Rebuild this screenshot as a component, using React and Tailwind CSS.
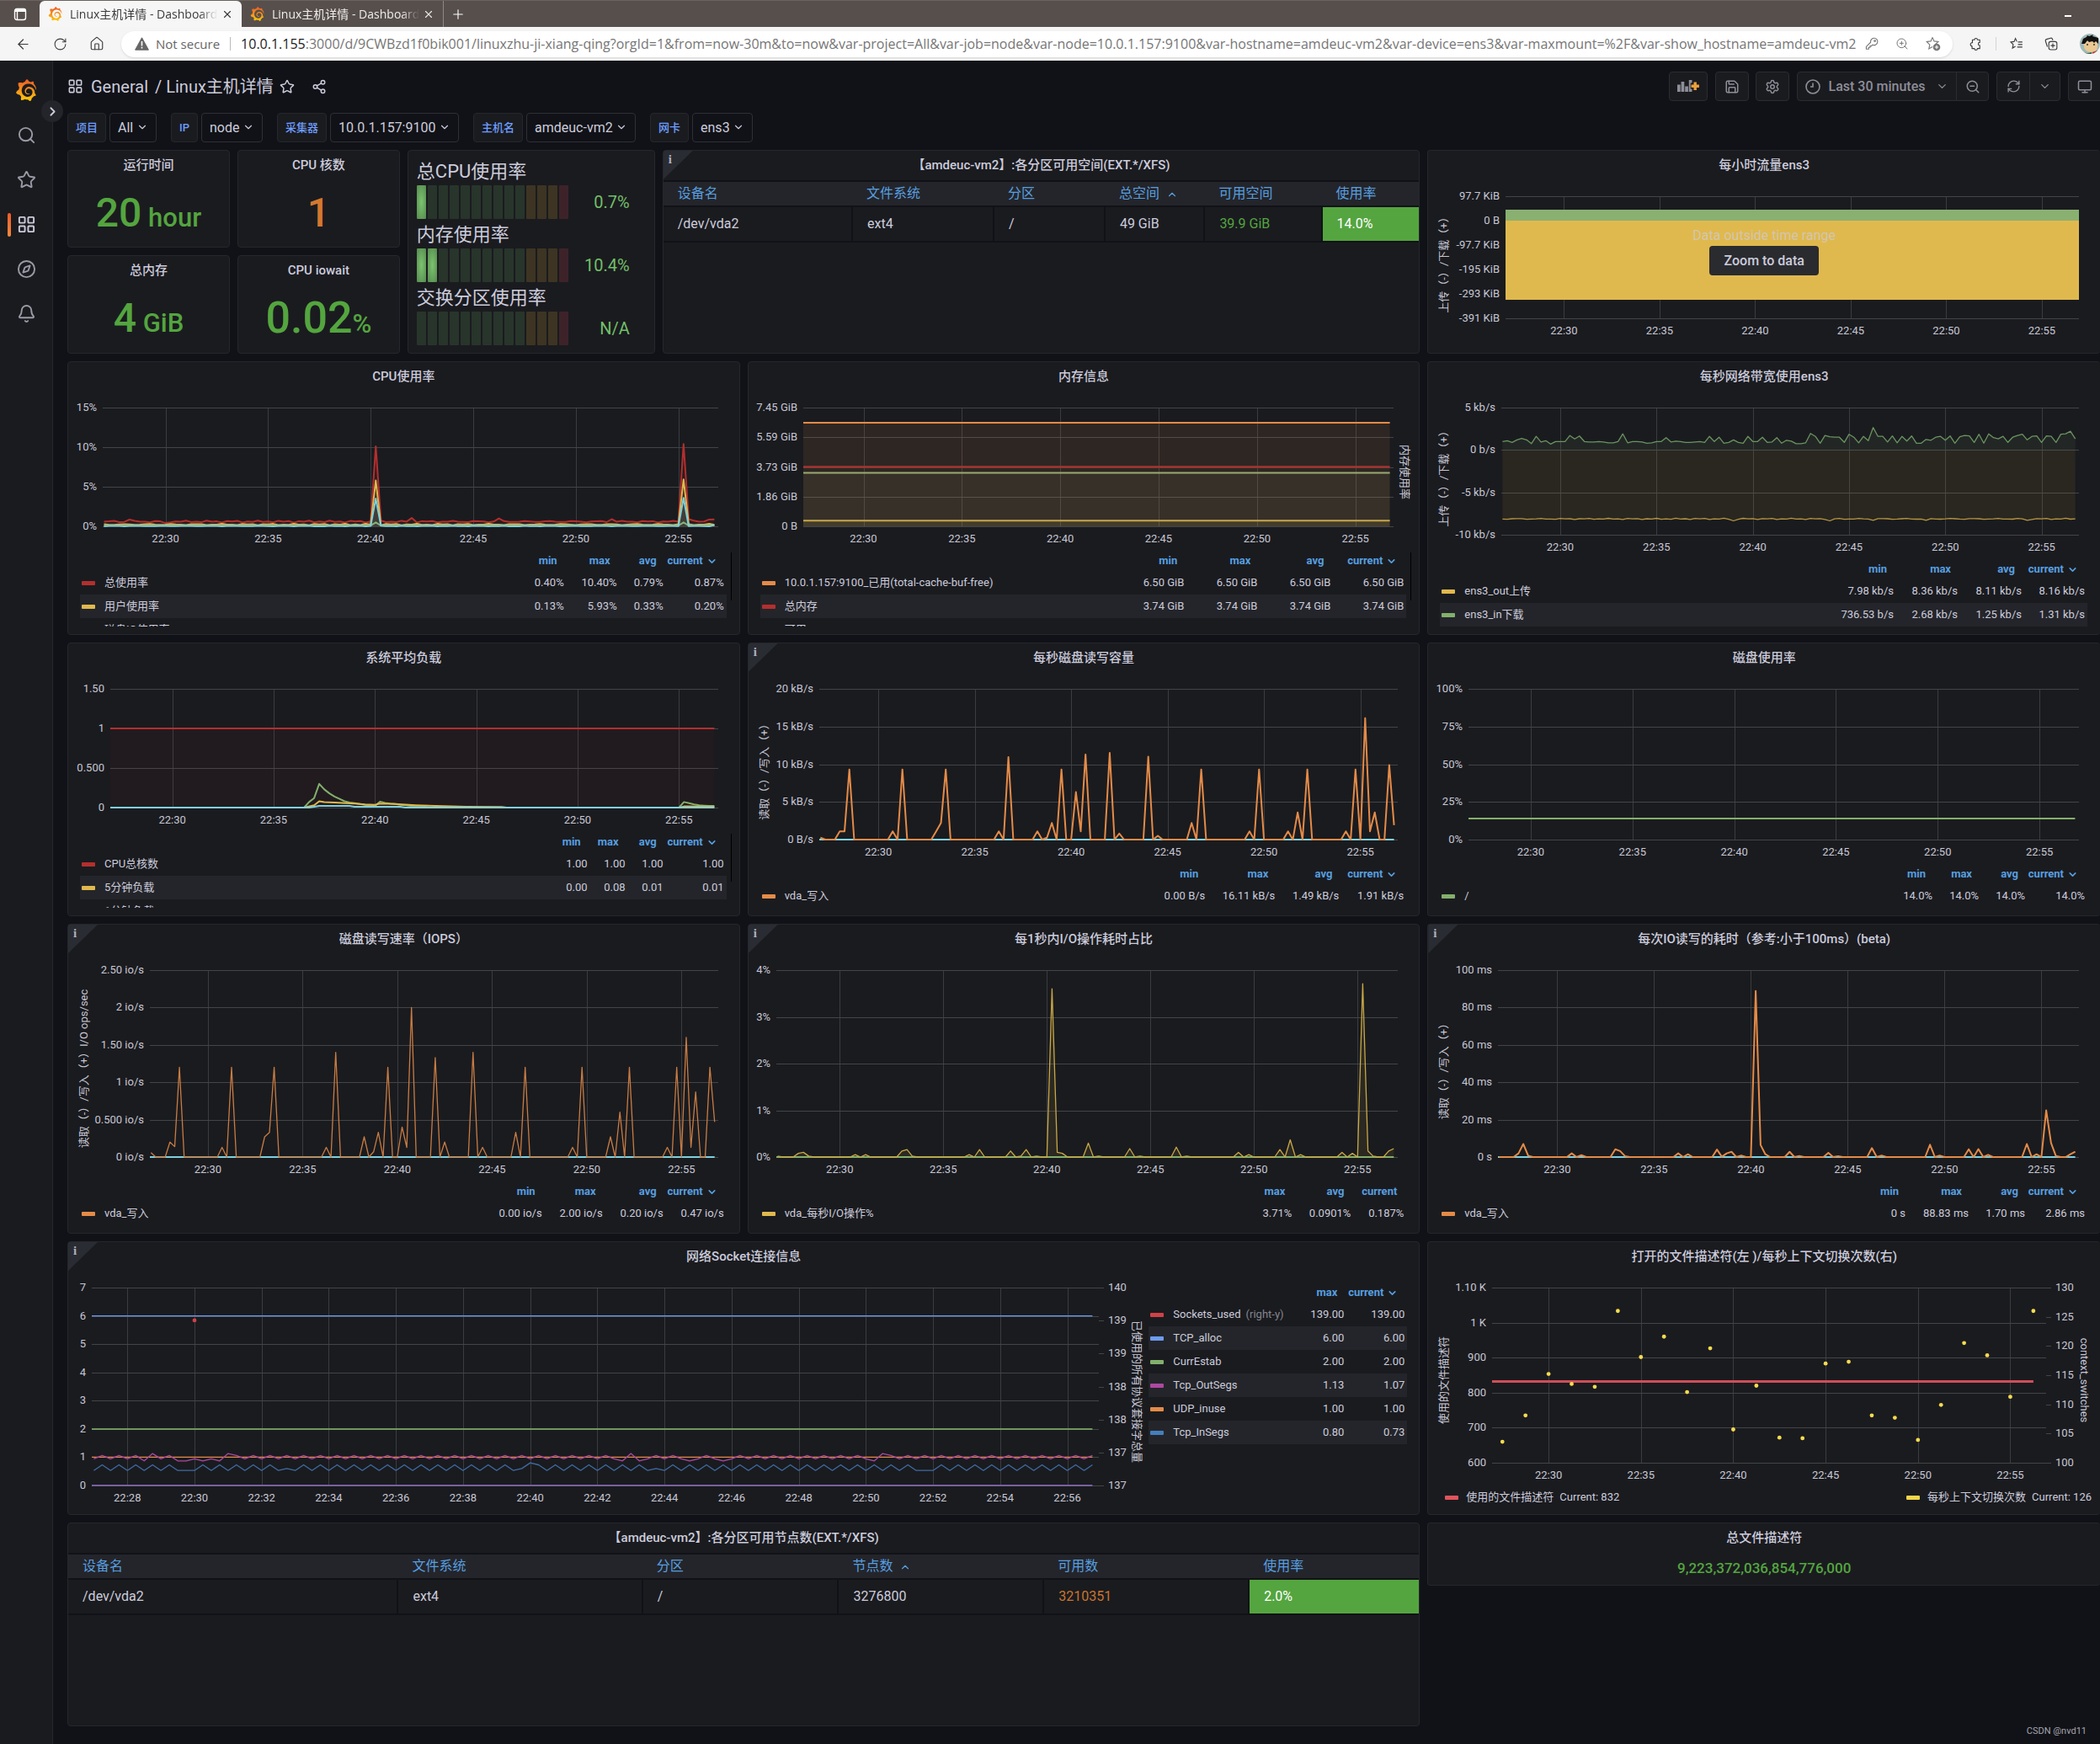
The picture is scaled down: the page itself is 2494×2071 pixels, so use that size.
import { useLayoutEffect, useRef, useState } from "react";
import {
  ArrowLeft,
  Bell,
  ChevronDown,
  ChevronRight,
  ChevronUp,
  Compass,
  House,
  LayoutGrid,
  Monitor,
  Plus,
  RefreshCw,
  RotateCw,
  Save,
  Search,
  Settings,
  Share2,
  Star,
  X,
  ZoomIn,
  ZoomOut,
} from "lucide-react";
import { SiGrafana } from "react-icons/si";

/* ---------- time series data ---------- */

// minutes after 22:00
const T0 = 26.94;
const SPAN = 30;
const STEP = 0.25;

const times = Array.from({ length: 120 }, (_, i) => 27 + i * STEP);

// fills every 15s step, anything that is not listed falls back to base
const sparse = (points, base = 0) =>
  times.map((t) => [t, points[t] ?? (typeof base === "function" ? base(t) : base)]);

const flat = (v, end = 56.75) => [[T0, v], [end, v]];

const wave = (t, k) => (Math.sin(t * 5.3 + k) + Math.sin(t * 12.7 + k * 3)) / 2;

const cpuTotal = sparse(
  { 28.25: 0.85, 30: 0.42, 40.25: 10.1, 42: 1.05, 46.25: 1, 51.75: 0.9, 55: 0.6, 55.25: 10.4, 55.5: 0.9, 56.5: 0.86, 56.75: 0.87 },
  (t) => 0.6 + 0.13 * wave(t, 1)
);
const cpuUser = sparse({ 40.25: 5.8, 55.25: 5.93 }, (t) => 0.23 + 0.1 * wave(t, 4));
const cpuSys = sparse({ 40.25: 3.5, 55.25: 3.6, 56.75: 0.15 }, (t) => 0.04 + 0.05 * wave(t, 7));
const cpuWait = sparse({ 40.25: 0.5, 55.25: 0.5 }, 0.1);

const load1 = sparse({
  36.75: 0.07, 37: 0.12, 37.25: 0.3, 37.5: 0.23, 37.75: 0.18, 38: 0.14, 38.25: 0.11, 38.5: 0.08, 38.75: 0.065,
  39: 0.055, 39.25: 0.045, 39.5: 0.035, 39.75: 0.02, 40: 0.02, 40.25: 0.075, 40.5: 0.06, 40.75: 0.05, 41: 0.045,
  41.25: 0.035, 41.5: 0.03, 41.75: 0.02, 42: 0.02, 42.25: 0.01, 42.5: 0.01, 55.25: 0.07, 55.5: 0.055, 55.75: 0.04,
  56: 0.03, 56.25: 0.025, 56.5: 0.02, 56.75: 0.02,
});
const load5 = [
  [T0, 0], [36.5, 0], [37, 0.03], [37.25, 0.08], [37.5, 0.07], [38, 0.065], [39, 0.05], [39.5, 0.04], [40, 0.035],
  [40.25, 0.05], [41, 0.045], [42, 0.03], [43, 0.02], [44.5, 0.012], [46.25, 0.008], [46.5, 0], [55, 0], [55.25, 0.015], [56.75, 0.01],
];
const load15 = [[T0, 0], [36.75, 0], [37.25, 0.02], [38.75, 0.02], [39, 0.01], [41.25, 0.01], [41.5, 0], [56.75, 0]];

const diskWrite = sparse({
  27: 0.25, 28: 1.1, 28.25: 1.1, 28.5: 9.3, 30.75: 1.1, 31.25: 9.3, 33: 1.1, 33.25: 2.2, 33.5: 9.3, 36.25: 1.1,
  36.75: 10.95, 38.25: 1.1, 38.75: 0.25, 39: 2.2, 39.5: 9.3, 40.25: 6.3, 40.5: 1.1, 40.75: 11.3, 42: 11.5, 42.5: 0.8,
  44: 11, 44.5: 0.5, 46.25: 2.2, 46.75: 9.3, 49.25: 1.1, 49.75: 9.3, 51.25: 1.1, 51.75: 3.6, 52.25: 9.3, 54.25: 1.1,
  54.75: 9.3, 55.25: 16.11, 55.5: 1.1, 55.75: 3.6, 56.5: 9.9, 56.75: 1.91,
});
const iops = sparse({
  27: 0.06, 28: 0.2, 28.25: 0.14, 28.5: 1.2, 30.75: 0.13, 31.25: 1.2, 33: 0.27, 33.25: 0.33, 33.5: 1.2, 36.25: 0.13,
  36.75: 1.4, 38.25: 0.27, 38.75: 0.07, 39: 0.33, 39.5: 1.2, 40.25: 0.4, 40.5: 0.13, 40.75: 2, 42: 1.33, 42.5: 0.2,
  44: 1.4, 44.5: 0.13, 46.25: 0.33, 46.75: 1.2, 49.25: 0.13, 49.75: 1.2, 51.25: 0.27, 51.75: 0.6, 52.25: 1.2,
  54.25: 0.13, 54.75: 1.2, 55.25: 1.6, 55.5: 0.13, 55.75: 0.87, 56.5: 1.2, 56.75: 0.47,
});
const ioPercent = sparse({
  27: 0.02, 28: 0.08, 28.25: 0.1, 28.5: 0.02, 30.75: 0.05, 31.25: 0.05, 33: 0.13, 33.25: 0.16, 33.5: 0.02, 36.25: 0.05,
  36.75: 0.16, 38.25: 0.13, 38.75: 0.02, 39: 0.16, 39.5: 0.02, 40.25: 3.6, 40.5: 0.1, 40.75: 0.08, 42: 0.3, 42.5: 0.02,
  44: 0.18, 44.5: 0.02, 46.25: 0.21, 46.75: 0.02, 49.25: 0.1, 49.75: 0.05, 51.25: 0.16, 51.75: 0.37, 52.25: 0.05,
  54.25: 0.1, 54.75: 0.08, 55.25: 3.71, 55.5: 0.13, 55.75: 0.02, 56.5: 0.13, 56.75: 0.18,
});
const ioTime = sparse({
  28: 2, 28.25: 7, 28.5: 0.7, 30.75: 2, 31.25: 1, 33: 4.2, 33.25: 3.2, 33.5: 0.5, 36.25: 2, 36.75: 1.5, 38.25: 4,
  38.5: 0.2, 38.75: 2, 39: 2.8, 39.5: 0.8, 40.25: 88.83, 40.5: 6.5, 40.75: 1.5, 42: 2.8, 42.5: 0.6, 44: 2.3, 44.5: 0.4,
  46.25: 4.8, 46.75: 0.8, 49.25: 6.6, 49.75: 0.8, 51.25: 4.2, 51.75: 4.3, 52.25: 1.2, 54.25: 7, 54.75: 1.5, 55.25: 25,
  55.5: 7.5, 55.75: 0.6, 56.5: 1.5, 56.75: 2.86,
});

const netIn = [
  1, 1.1, 0.9, 1.2, 1.35, 1.2, 0.75, 1.6, 0.95, 1.1, 0.7, 1, 1, 1, 1.7, 1.3, 1.65, 1, 0.95, 0.95, 1, 0.95, 0.85, 0.85, 1,
  1.9, 0.85, 1, 1, 0.95, 0.8, 0.85, 1, 1, 1.45, 0.95, 1.05, 1, 0.9, 0.9, 0.95, 1, 0.9, 1.6, 1, 1.5, 0.8, 0.9, 1.2, 0.9,
  0.8, 1.6, 1, 1, 1.5, 0.9, 0.95, 1.45, 0.8, 1.15, 1.05, 0.75, 0.75, 0.85, 1.95, 1.6, 0.8, 1.7, 1.55, 1.5, 1.5, 0.9, 1.85,
  1.5, 0.85, 1.6, 1.1, 2.65, 1.6, 1.6, 0.95, 1.65, 0.85, 1.6, 1.05, 1.65, 0.8, 0.8, 1.25, 1.15, 1.5, 1.6, 1.15, 1.65, 0.8,
  1.55, 1.7, 1.65, 0.9, 1.85, 0.8, 1.9, 1.45, 1.3, 1.6, 0.9, 1.5, 1.7, 1.85, 1.2, 1.6, 1.65, 0.9, 1.65, 1.6, 0.9, 1.85,
  1.9, 2.2, 1.3,
].map((v, i) => [27 + i * STEP, v]);
const netOut = sparse({ 39: -8.36, 44: -8.36, 46.25: -8.3, 49: -8.3, 54.25: -8.3 }, (t) => -8.13 - 0.08 * wave(t, 2));

const outSegs = sparse(
  { 28.5: 0.87, 28.75: 1.13, 29.5: 0.87, 29.75: 0.87, 30.25: 0.87, 30.75: 0.87, 31: 1.13, 42.75: 0.87, 43: 1.13, 43.25: 0.87, 44.75: 0.87, 45.75: 0.87, 50.25: 0.87, 50.5: 1.13 },
  (t) => ((t * 4) % 2 === 1 ? 1.06 : 0.94)
);
const inSegs = sparse(
  { 29.5: 0.53, 29.75: 0.53, 32.75: 0.6, 39.75: 0.6, 40: 0.8, 43.75: 0.6, 51.75: 0.53, 52: 0.53 },
  (t) => ((t * 4) % 2 === 1 ? 0.73 : 0.53)
);

const contextSwitches = [
  103.6, 108.1, 115.2, 113.5, 113, 126, 118.1, 121.6, 112.1, 119.6, 105.7, 113.2, 104.3, 104.2, 117, 117.3, 108.1, 107.7,
  103.9, 109.9, 120.5, 118.4, 111.3, 126,
].map((v, i) => [27.5 + i * 1.25, v]);

/* ---------- chart ---------- */

const FIVE_MIN = [30, 35, 40, 45, 50, 55];
const TWO_MIN = [28, 30, 32, 34, 36, 38, 40, 42, 44, 46, 48, 50, 52, 54, 56];

const useSize = () => {
  const ref = useRef(null);
  const [size, setSize] = useState({ width: 0, height: 0 });

  useLayoutEffect(() => {
    const measure = () => {
      const { width, height } = ref.current.getBoundingClientRect();
      setSize({ width: Math.round(width), height: Math.round(height) });
    };
    measure();
    window.addEventListener("resize", measure);
    return () => window.removeEventListener("resize", measure);
  }, []);

  return [ref, size];
};

const Chart = ({
  left,
  right = 25,
  yTicks,
  yTicksRight,
  min = 0,
  max,
  xTicks = FIVE_MIN,
  series = [],
  dots = [],
  yLabel,
  yLabelRight,
  yLabelRightX = 13,
  children,
}) => {
  const [ref, { width, height }] = useSize();
  const top = 19;
  const plotW = width - left - right;
  const plotH = height - top - 29;
  const x = (t) => left + ((t - T0) / SPAN) * plotW;
  const y = (v, lo = min, hi = max) => top + (1 - (v - lo) / (hi - lo)) * plotH;
  const line = (pts) => pts.map(([t, v], i) => `${i ? "L" : "M"}${x(t).toFixed(1)} ${y(v).toFixed(1)}`).join("");
  const crisp = (v) => Math.round(v) + 0.5;
  const labelY = top + plotH / 2 + 6;

  return (
    <div ref={ref} className="relative min-h-0 min-w-0 flex-1">
      {width > 0 && (
        <svg width={width} height={height} className="absolute inset-0 overflow-visible fill-[#c7c7d4] text-[13px]">
          {xTicks.map((t) => (
            <g key={t}>
              <line x1={crisp(x(t))} x2={crisp(x(t))} y1={top} y2={top + plotH} stroke="#3b3c40" />
              <text x={x(t)} y={top + plotH + 19} textAnchor="middle">
                22:{t}
              </text>
            </g>
          ))}
          {yTicks.map((label, i) => {
            const ty = top + (i / (yTicks.length - 1)) * plotH;
            return (
              <g key={i}>
                <line x1={left} x2={left + plotW} y1={crisp(ty)} y2={crisp(ty)} stroke="#434448" />
                <text x={left - 7} y={ty + 4} textAnchor="end">
                  {label}
                </text>
              </g>
            );
          })}
          {yTicksRight?.map((label, i) => {
            const ty = top + (i / (yTicksRight.length - 1)) * plotH;
            return (
              <g key={i}>
                <line x1={left + plotW} x2={left + plotW + 6} y1={crisp(ty)} y2={crisp(ty)} stroke="#434448" />
                <text x={left + plotW + 11} y={ty + 4}>
                  {label}
                </text>
              </g>
            );
          })}
          {series.map(({ color, points, stroke = 2, fill = 0, opacity = 1 }, i) => (
            <g key={i} fill="none">
              {fill > 0 && (
                <path
                  d={`${line(points)}L${x(points.at(-1)[0])} ${y(0)}L${x(points[0][0])} ${y(0)}Z`}
                  fill={color}
                  fillOpacity={fill}
                />
              )}
              <path d={line(points)} stroke={color} strokeWidth={stroke} strokeOpacity={opacity} strokeLinejoin="round" />
            </g>
          ))}
          {dots.map(({ color, points, lo, hi }, i) => (
            <g key={i} fill={color}>
              {points.map(([t, v]) => (
                <circle key={t} cx={x(t)} cy={y(v, lo, hi)} r="2.4" />
              ))}
            </g>
          ))}
          {yLabel && (
            <text transform={`translate(23 ${labelY}) rotate(-90)`} textAnchor="middle">
              {yLabel}
            </text>
          )}
          {yLabelRight && (
            <text transform={`translate(${width - yLabelRightX - 10} ${labelY}) rotate(90)`} textAnchor="middle">
              {yLabelRight}
            </text>
          )}
        </svg>
      )}
      {children}
    </div>
  );
};

/* ---------- building blocks ---------- */

const Panel = ({ title, info, className, children }) => (
  <section className={`relative flex min-h-0 min-w-0 flex-col rounded-sm border border-[#26272c] bg-[#1a1b1f] ${className}`}>
    {info && (
      <span className="absolute left-0 top-0 h-[34px] w-[35px] bg-[#2a2c33] pl-[6px] pt-[2px] font-['Liberation_Serif',serif] text-[15px] font-bold leading-4 text-[#b0b0bb] [clip-path:polygon(0_0,100%_0,0_100%)]">
        i
      </span>
    )}
    {title && (
      <h2 className="h-[35px] shrink-0 text-center text-[15px] font-medium leading-[35px] whitespace-nowrap">{title}</h2>
    )}
    {children}
  </section>
);

const SERIES_BG = {
  red: "bg-[#b32f2e]",
  yellow: "bg-[#e0b94e]",
  orange: "bg-[#e48b48]",
  green: "bg-[#82b06c]",
  crimson: "bg-[#cf4247]",
  blue: "bg-[#6e9cf0]",
  purple: "bg-[#ad489f]",
  navy: "bg-[#447ebc]",
};

const Legend = ({ columns, widths, rows, sort = true, clipped, scroll, wrap = "pl-[14px] pr-[15px] pb-[9px]" }) => (
  <div className={`relative shrink-0 ${wrap}`}>
    <div className={clipped ? "h-[90px] overflow-hidden" : ""}>
      <table className="w-full table-fixed border-collapse text-[13px]">
        <thead>
          <tr className="h-6 text-[#579fe0]">
            <th />
            {columns.map((c, i) => (
              <th key={c} style={{ width: widths[i] }} className="p-0 pr-[11px] text-right font-bold whitespace-nowrap">
                {c}
                {sort && i === columns.length - 1 && <ChevronDown size={13} strokeWidth={3} className="ml-1 inline" />}
              </th>
            ))}
          </tr>
        </thead>
        <tbody>
          {rows.map(([color, name, ...values]) => (
            <tr key={name} className="h-7 even:bg-[#24252a]">
              <td className="p-0 whitespace-nowrap">
                <span className={`ml-[2px] mr-[11px] inline-block h-[5px] w-4 rounded-[1px] align-middle ${SERIES_BG[color]}`} />
                {name}
                {name === "Sockets_used" && <span className="ml-[6px] text-[#85858f]">(right-y)</span>}
              </td>
              {values.map((v, i) => (
                <td key={i} className="p-0 pr-[3px] text-right whitespace-nowrap">
                  {v}
                </td>
              ))}
            </tr>
          ))}
        </tbody>
      </table>
    </div>
    {scroll && <span className="absolute right-[9px] top-[2px] h-[57px] w-px bg-black" />}
  </div>
);

const DataTable = ({ columns, row }) => (
  <table className="w-full table-fixed border-collapse text-left text-[16px]">
    <thead>
      <tr className="h-[30px] border-y-2 border-[#111217] bg-[#24252a] text-[#579fe0]">
        {columns.map(({ label, width, sorted }) => (
          <th key={label} style={{ width }} className="p-0 pl-[17px] font-normal">
            {label}
            {sorted && <ChevronUp size={14} className="ml-2 inline" />}
          </th>
        ))}
      </tr>
    </thead>
    <tbody>
      <tr className="h-[42px] border-b-2 border-[#111217]">
        {row.map(({ value, className = "" }) => (
          <td key={value} className={`border-r-2 border-[#111217] p-0 pl-[17px] last:border-r-0 ${className}`}>
            {value}
          </td>
        ))}
      </tr>
    </tbody>
  </table>
);

const Stat = ({ title, value, unit, className, size = "text-[48px]", tone = "text-[#54a53f]" }) => (
  <Panel title={title} className={className}>
    <div className={`flex flex-1 items-center justify-center pb-[2px] font-medium ${tone}`}>
      <p className={`leading-none ${size}`}>
        {value}
        {unit && <span className="text-[31px]">{unit}</span>}
      </p>
    </div>
  </Panel>
);

const Gauge = ({ title, value, lit }) => (
  <div>
    <p className="h-8 text-[22px] leading-8">{title}</p>
    <div className="flex h-[43px] items-start">
      <div className="flex h-10 gap-[2px]">
        {Array.from({ length: 14 }, (_, i) => {
          let tone = "bg-[#28352b]";
          if (i >= 10) tone = "bg-[#3d3423]";
          if (i >= 13) tone = "bg-[#3d2329]";
          if (i < lit) tone = "bg-radial from-[#7cc46f] to-[#558a4f]";
          return <span key={i} className={`w-[11px] rounded-[1px] ${tone}`} />;
        })}
      </div>
      <span className="flex-1 text-right text-[20px] leading-10 text-[#73bf69]">{value}</span>
    </div>
  </div>
);

const GrafanaLogo = ({ size }) => (
  <>
    <svg width="0" height="0" className="absolute">
      <linearGradient id="grafana" x1="0" y1="0" x2="0" y2="1">
        <stop offset="0" stopColor="#f05a28" />
        <stop offset="1" stopColor="#fbca0a" />
      </linearGradient>
    </svg>
    <SiGrafana size={size} fill="url(#grafana)" />
  </>
);

/* ---------- browser chrome ---------- */

const URL_HOST = "10.0.1.155";
const URL_REST =
  ":3000/d/9CWBzd1f0bik001/linuxzhu-ji-xiang-qing?orgId=1&from=now-30m&to=now&var-project=All&var-job=node&var-node=10.0.1.157:9100&var-hostname=amdeuc-vm2&var-device=ens3&var-maxmount=%2F&var-show_hostname=amdeuc-vm2";

const BrowserTab = ({ active }) => (
  <div
    className={`flex h-8 w-60 items-center pl-[10px] pr-[10px] ${
      active ? "rounded-t-md bg-[#f6f6f6] text-[#3b3b3b]" : "my-1 border-r border-[#8f8885] text-[#eeeceb]"
    }`}
  >
    <GrafanaLogo size={17} />
    <span className="ml-[9px] text-[14px] whitespace-nowrap [mask-image:linear-gradient(to_right,black_88%,transparent)]">
      Linux主机详情 - Dashboard
    </span>
    <button aria-label="Close tab" className="ml-auto">
      <X size={14} />
    </button>
  </div>
);

const Browser = () => (
  <div className="font-['Open_Sans','Noto_Sans_CJK_SC',sans-serif]">
    <div className="flex h-8 items-center overflow-hidden border-t border-[#6b6360] bg-[#574f4c]">
      <button aria-label="Tab actions" className="ml-4 mr-[15px] text-white">
        <svg width="16" height="16" viewBox="0 0 16 16" fill="none" stroke="currentColor" strokeWidth="1.4">
          <rect x="1.500" y="1.500" width="13" height="13" rx="2.500" />
          <path d="M1.500 4h13M2 2.500h12" strokeWidth="2" />
          <path d="M4.500 4v10" />
        </svg>
      </button>
      <BrowserTab active />
      <BrowserTab />
      <button aria-label="New tab" className="ml-2 text-white">
        <Plus size={18} strokeWidth={1.5} />
      </button>
      <button aria-label="Minimize" className="ml-auto mr-[30px] flex h-6 w-3 items-center pt-1">
        <span className="h-[2px] w-2 bg-white" />
      </button>
    </div>
    <div className="flex h-10 items-center overflow-hidden bg-[#f5f5f5] text-[#3b3b3b]">
      <button aria-label="Back" className="ml-[18px]">
        <ArrowLeft size={19} strokeWidth={1.5} />
      </button>
      <button aria-label="Reload" className="ml-[26px]">
        <RotateCw size={17} strokeWidth={1.5} />
      </button>
      <button aria-label="Home" className="ml-[26px]">
        <House size={18} strokeWidth={1.5} />
      </button>
      <div className="ml-5 flex h-[31px] min-w-0 flex-1 items-center rounded-full bg-white shadow-sm">
        <svg width="17" height="16" viewBox="0 0 17 16" className="ml-4 shrink-0">
          <path d="M8.5 0.8 16.4 15.2H0.6Z" fill="#666" stroke="#666" strokeLinejoin="round" />
          <path d="M8.5 5v5.4M8.5 11.8v1.8" stroke="#fff" strokeWidth="1.6" />
        </svg>
        <span className="ml-2 shrink-0 text-[15px] text-[#666]">Not secure</span>
        <span className="mx-3 h-4 w-px shrink-0 bg-[#bbb]" />
        <p className="min-w-0 flex-1 overflow-hidden text-[16px] whitespace-nowrap text-[#767676]">
          <span className="text-[#222]">{URL_HOST}</span>
          {URL_REST}
        </p>
        <div className="flex shrink-0 items-center gap-5 pr-[14px] text-[#767676]">
          <svg width="16" height="16" viewBox="0 0 16 16" fill="none" stroke="currentColor" strokeWidth="1.1">
            <path d="M10.5 1.2a4.2 4.2 0 1 1-1.6 8l-1.3 1.4H6v1.7H4.3v1.9H1.4v-2.8l5.2-5.2A4.2 4.2 0 0 1 10.5 1.2Z" />
            <circle cx="11.6" cy="4.6" r=".9" />
          </svg>
          <ZoomIn size={16} strokeWidth={1.5} />
          <svg width="18" height="18" viewBox="0 0 18 18" fill="none" stroke="currentColor" strokeWidth="1.1">
            <path d="m8 1.4 2 4.5 5 .5-3.600 3.3M8 12.600 3.800 15l1-4.900L1.200 6.500l4.900-.6L8 1.400" />
            <circle cx="13" cy="13" r="4.300" fill="currentColor" stroke="none" />
            <path d="M13 10.800v4.400M10.800 13h4.400" stroke="#fff" />
          </svg>
        </div>
      </div>
      <div className="ml-5 flex w-[155px] shrink-0 items-center">
        <svg width="17" height="18" viewBox="0 0 17 18" fill="none" stroke="currentColor" strokeWidth="1.3" strokeLinejoin="round">
          <path d="M4 3.500h2.800a2 2 0 1 1 4 0H14v3.700a2 2 0 1 0 0 4V15.500h-3.200a2 2 0 0 1-4 0H3.500v-3.300a2.400 2.400 0 0 1 .5-4.800Z" />
        </svg>
        <span className="ml-[16px] h-4 w-px bg-[#d4d4d4]" />
        <svg width="18" height="18" viewBox="0 0 18 18" fill="none" stroke="currentColor" strokeWidth="1.3" className="ml-4">
          <path d="M9.500 6 7.600 1.600 5.700 6 1 6.600l3.500 3.300-.9 4.900 4-2.300M11 6.500h6M11 10h6M10 13.500h7" />
        </svg>
        <svg width="18" height="18" viewBox="0 0 18 18" fill="none" stroke="currentColor" strokeWidth="1.3" className="ml-[26px]">
          <rect x="6" y="6" width="11" height="11" rx="2.500" />
          <path d="M11.500 8.500v6M8.500 11.500h6M4 13 1.500 5.300A2 2 0 0 1 2.800 2.800L8.500 1.200a2 2 0 0 1 2.400 1.300l.6 1.700" />
        </svg>
        <svg width="24" height="24" viewBox="0 0 24 24" className="ml-[26px] shrink-0">
          <clipPath id="avatar">
            <circle cx="12" cy="12" r="12" />
          </clipPath>
          <g clipPath="url(#avatar)">
            <rect width="24" height="24" fill="#9fb9b8" />
            <path d="M4 9h17v6c0 5-4 7-8 7s-8-3-8-7Z" fill="#e9c892" />
            <path d="M2 12 4 6l4-2 1-2 2 1 5-2-1 2 7 2v7l-3-3-2 2-2-2-4 1-2-2-3 4Z" fill="#111" />
            <path d="M9 12v2M17 12v2" stroke="#222" strokeWidth="1.400" />
            <path d="M3 21c5 3 8 2 11 1v3H3Z" fill="#2f5a3c" />
            <path d="m15 22 6-2v4h-6z" fill="#c8372d" />
          </g>
        </svg>
      </div>
    </div>
  </div>
);

/* ---------- grafana chrome ---------- */

const SideMenu = () => (
  <nav className="relative flex w-[63px] shrink-0 flex-col items-center border-r border-[#26272c] bg-[#1a1b1f] pt-[22px] text-[#9a9aa6]">
    <a href="#home" aria-label="Grafana" className="flex h-10 items-start">
      <GrafanaLogo size={26} />
    </a>
    {[
      { name: "Search", Icon: Search },
      { name: "Starred", Icon: Star },
      { name: "Dashboards", Icon: LayoutGrid, active: true },
      { name: "Explore", Icon: Compass },
      { name: "Alerting", Icon: Bell },
    ].map(({ name, Icon, active }) => (
      <a
        key={name}
        href={`#${name.toLowerCase()}`}
        aria-label={name}
        className={`relative flex h-[53px] w-full items-center justify-center ${active ? "text-[#ccccdc]" : ""}`}
      >
        {active && <span className="absolute left-[9px] h-7 w-1 rounded-sm bg-linear-to-b from-[#f05a28] to-[#f58a3c]" />}
        <Icon size={23} />
      </a>
    ))}
    <button
      aria-label="Expand menu"
      className="absolute -right-[13px] top-[47px] flex size-[26px] items-center justify-center rounded-full bg-[#24252a] text-[#ccccdc]"
    >
      <ChevronRight size={17} strokeWidth={2.5} />
    </button>
  </nav>
);

const toolButton = "flex h-[35px] items-center justify-center rounded-sm border border-[#2b2c31] bg-[#1a1b1f]";

const Toolbar = () => (
  <header className="flex h-[35px] items-center overflow-hidden text-[#8e8e99]">
    <LayoutGrid size={19} className="text-[#ccccdc]" />
    <h1 className="ml-[9px] flex gap-2 text-[20px] text-[#ccccdc]">
      <a href="#general">General</a>
      <a href="#dashboard">/ Linux主机详情</a>
    </h1>
    <button aria-label="Mark as favorite" className="ml-[7px] text-[#ccccdc]">
      <Star size={18} />
    </button>
    <button aria-label="Share dashboard" className="ml-5 text-[#ccccdc]">
      <Share2 size={18} />
    </button>

    <div className="ml-auto flex shrink-0 gap-[9px]">
      <button aria-label="Add panel" className={`${toolButton} w-[46px]`}>
        <svg width="26" height="15" viewBox="0 0 26 15">
          <path d="M0 5.500h3.700V14H0zM4.600 2h3.700v12H4.600zM9.200 7.500h3.700V14H9.200zM13.800 0h3.700v3.500h-1.800v7h1.800V14h-3.700z" fill="#8e8e99" />
          <path d="M19.500 2.500h3.400v3h3v3.400h-3v3h-3.400v-3h-3V5.500h3z" fill="#eba13b" />
        </svg>
      </button>
      <button aria-label="Save dashboard" className={`${toolButton} w-10`}>
        <Save size={18} />
      </button>
      <button aria-label="Dashboard settings" className={`${toolButton} -ml-px w-10`}>
        <Settings size={18} />
      </button>
      <div className="flex">
        <button className={`${toolButton} w-[190px] rounded-r-none text-[16px] font-medium`}>
          <svg width="18" height="18" viewBox="0 0 18 18" fill="none" stroke="currentColor" strokeWidth="1.600">
            <circle cx="9" cy="9" r="8" />
            <path d="M9 4.500V9H6" />
          </svg>
          <span className="ml-[10px]">Last 30 minutes</span>
          <ChevronDown size={15} className="ml-[13px]" />
        </button>
        <button aria-label="Zoom out time range" className={`${toolButton} -ml-px w-[39px] rounded-l-none`}>
          <ZoomOut size={18} />
        </button>
      </div>
      <div className="flex">
        <button aria-label="Refresh" className={`${toolButton} w-10 rounded-r-none`}>
          <RefreshCw size={17} />
        </button>
        <button aria-label="Refresh interval" className={`${toolButton} -ml-px w-[37px] rounded-l-none`}>
          <ChevronDown size={15} />
        </button>
      </div>
      <button aria-label="Cycle view mode" className={`${toolButton} w-[38px] rounded-r-none border-r-0`}>
        <Monitor size={18} />
      </button>
    </div>
  </header>
);

const variables = [
  { id: "project", label: "项目", value: "All" },
  { id: "job", label: "IP", value: "node" },
  { id: "node", label: "采集器", value: "10.0.1.157:9100" },
  { id: "hostname", label: "主机名", value: "amdeuc-vm2" },
  { id: "device", label: "网卡", value: "ens3" },
];

const Variables = () => (
  <div className="flex flex-wrap gap-x-[17px]">
    {variables.map(({ id, label, value }) => (
      <div key={id} className="flex gap-1">
        <label
          htmlFor={id}
          className="flex h-[35px] items-center rounded-sm border border-[#26272c] bg-[#1a1b1f] px-[9px] text-[13px] font-medium text-[#6e9fff]"
        >
          {label}
        </label>
        <div className="relative">
          <select
            id={id}
            className="h-[35px] appearance-none rounded-sm border border-[#2f3035] bg-[#111217] pl-[9px] pr-[26px] text-[16px]"
          >
            <option>{value}</option>
          </select>
          <ChevronDown size={14} className="pointer-events-none absolute right-[10px] top-[10px]" />
        </div>
      </div>
    ))}
  </div>
);

/* ---------- dashboard ---------- */

const C = {
  red: "#b32f2e",
  yellow: "#e0b94e",
  orange: "#e48b48",
  green: "#82b06c",
  cyan: "#7fd0de",
};

const App = () => {
  return (
    <div className="flex min-h-screen flex-col overflow-hidden bg-[#111217] font-['Roboto','Noto_Sans_CJK_SC',sans-serif] text-[#ccccdc]">
      <Browser />
      <div className="flex flex-1">
        <SideMenu />
        <div className="flex min-w-0 flex-1 flex-col pl-[17px] pt-[13px]">
          <Toolbar />
          <div className="mb-[9px] mt-[14px]">
            <Variables />
          </div>

          <main className="grid grid-cols-24 grid-rows-[116px_117px_325px_325px_368px_325px_75px_158px] gap-[9px]">
            <Stat title="运行时间" value="20" unit=" hour" className="col-span-2" />
            <Stat title="CPU 核数" value="1" tone="text-[#d4782f]" className="col-span-2" />

            <Panel className="col-span-3 row-span-2 px-[10px] pt-[9px]">
              <div className="flex flex-col pr-[19px]">
                <Gauge title="总CPU使用率" value="0.7%" lit={1} />
                <Gauge title="内存使用率" value="10.4%" lit={2} />
                <Gauge title="交换分区使用率" value="N/A" lit={0} />
              </div>
            </Panel>

            <Panel title="【amdeuc-vm2】:各分区可用空间(EXT.*/XFS)" info className="col-span-9 row-span-2">
              <DataTable
                columns={[
                  { label: "设备名", width: "25%" },
                  { label: "文件系统", width: "18.700%" },
                  { label: "分区", width: "14.700%" },
                  { label: "总空间", width: "13.200%", sorted: true },
                  { label: "可用空间", width: "15.500%" },
                  { label: "使用率" },
                ]}
                row={[
                  { value: "/dev/vda2" },
                  { value: "ext4" },
                  { value: "/" },
                  { value: "49 GiB" },
                  { value: "39.9 GiB", className: "text-[#54a53f]" },
                  { value: "14.0%", className: "bg-[#54a53f] text-white" },
                ]}
              />
            </Panel>

            <Panel title="每小时流量ens3" className="col-span-8 row-span-2 border-r-0 pb-3">
              <Chart
                left={92}
                yLabel="上传（-）/下载（+）"
                yTicks={["97.7 KiB", "0 B", "-97.7 KiB", "-195 KiB", "-293 KiB", "-391 KiB"]}
                min={-390.8}
                max={97.7}
                series={[
                  { color: "#89b071", points: flat(42, 56.94), fill: 1, stroke: 1 },
                  { color: "#e0b94e", points: flat(-315, 56.94), fill: 1, stroke: 1 },
                ]}
              >
                <div className="absolute inset-x-0 top-[54px] flex flex-col items-center text-[16px]">
                  <p className="text-[#ccccdc]/70">Data outside time range</p>
                  <button className="h-[35px] rounded-sm bg-[#2a2b2f] px-[17px] font-medium">Zoom to data</button>
                </div>
              </Chart>
            </Panel>

            <Stat title="总内存" value="4" unit=" GiB" className="col-span-2" />
            <Stat title="CPU iowait" value="0.02" unit="%" size="text-[52px]" className="col-span-2" />

            <Panel title="CPU使用率" className="col-span-8">
              <Chart
                left={41}
                yTicks={["15%", "10%", "5%", "0%"]}
                max={15}
                series={[
                  { color: C.red, points: cpuTotal, fill: 0.1 },
                  { color: C.yellow, points: cpuUser, fill: 0.1 },
                  { color: C.green, points: cpuWait },
                  { color: C.cyan, points: cpuSys, fill: 0.1 },
                ]}
              />
              <Legend
                clipped
                scroll
                columns={["min", "max", "avg", "current"]}
                widths={[60, 63, 55, 72]}
                rows={[
                  ["red", "总使用率", "0.40%", "10.40%", "0.79%", "0.87%"],
                  ["yellow", "用户使用率", "0.13%", "5.93%", "0.33%", "0.20%"],
                  ["cyan", "磁盘IO使用率"],
                ]}
              />
            </Panel>

            <Panel title="内存信息" className="col-span-8">
              <Chart
                left={65}
                right={31}
                yTicks={["7.45 GiB", "5.59 GiB", "3.73 GiB", "1.86 GiB", "0 B"]}
                max={7.45}
                yLabelRight="内存使用率"
                yLabelRightX={12}
                series={[
                  { color: C.orange, points: flat(6.5), fill: 0.1 },
                  { color: C.red, points: flat(3.74) },
                  { color: "#9aab70", points: flat(3.36), fill: 0.08 },
                  { color: "#c7a84c", points: flat(0.36), fill: 0.1 },
                ]}
              />
              <Legend
                clipped
                scroll
                columns={["min", "max", "avg", "current"]}
                widths={[87, 87, 87, 87]}
                rows={[
                  ["orange", "10.0.1.157:9100_已用(total-cache-buf-free)", "6.50 GiB", "6.50 GiB", "6.50 GiB", "6.50 GiB"],
                  ["red", "总内存", "3.74 GiB", "3.74 GiB", "3.74 GiB", "3.74 GiB"],
                  ["cyan", "可用"],
                ]}
              />
            </Panel>

            <Panel title="每秒网络带宽使用ens3" className="col-span-8 border-r-0">
              <Chart
                left={87}
                yLabel="上传（-）/下载（+）"
                yTicks={["5 kb/s", "0 b/s", "-5 kb/s", "-10 kb/s"]}
                min={-10}
                max={5}
                series={[
                  { color: "#6b9460", points: netIn, stroke: 1.3, fill: 0.1 },
                  { color: "#b8973f", points: netOut, stroke: 1.3, fill: 0.1 },
                ]}
              />
              <Legend
                columns={["min", "max", "avg", "current"]}
                widths={[90, 76, 76, 75]}
                rows={[
                  ["yellow", "ens3_out上传", "7.98 kb/s", "8.36 kb/s", "8.11 kb/s", "8.16 kb/s"],
                  ["green", "ens3_in下载", "736.53 b/s", "2.68 kb/s", "1.25 kb/s", "1.31 kb/s"],
                ]}
              />
            </Panel>

            <Panel title="系统平均负载" className="col-span-8">
              <Chart
                left={50}
                yTicks={["1.50", "1", "0.500", "0"]}
                max={1.5}
                series={[
                  { color: C.red, points: flat(1), fill: 0.05 },
                  { color: C.green, points: load1 },
                  { color: C.yellow, points: load5 },
                  { color: C.cyan, points: load15 },
                ]}
              />
              <Legend
                clipped
                scroll
                columns={["min", "max", "avg", "current"]}
                widths={[45, 45, 45, 72]}
                rows={[
                  ["red", "CPU总核数", "1.00", "1.00", "1.00", "1.00"],
                  ["yellow", "5分钟负载", "0.00", "0.08", "0.01", "0.01"],
                  ["cyan", "1分钟负载"],
                ]}
              />
            </Panel>

            <Panel title="每秒磁盘读写容量" info className="col-span-8">
              <Chart
                left={84}
                right={26}
                yLabel="读取（-）/写入（+）"
                yTicks={["20 kB/s", "15 kB/s", "10 kB/s", "5 kB/s", "0 B/s"]}
                max={20}
                series={[
                  { color: C.cyan, points: flat(0) },
                  { color: C.orange, points: diskWrite },
                ]}
              />
              <Legend
                columns={["min", "max", "avg", "current"]}
                widths={[80, 83, 76, 77]}
                rows={[["orange", "vda_写入", "0.00 B/s", "16.11 kB/s", "1.49 kB/s", "1.91 kB/s"]]}
              />
            </Panel>

            <Panel title="磁盘使用率" className="col-span-8 border-r-0">
              <Chart
                left={48}
                yTicks={["100%", "75%", "50%", "25%", "0%"]}
                max={100}
                series={[{ color: C.green, points: flat(14) }]}
              />
              <Legend
                columns={["min", "max", "avg", "current"]}
                widths={[55, 55, 55, 71]}
                rows={[["green", "/", "14.0%", "14.0%", "14.0%", "14.0%"]]}
              />
            </Panel>

            <Panel title="磁盘读写速率（IOPS）" info className="col-span-8">
              <Chart
                left={97}
                yLabel="读取（-）/写入（+）I/O ops/sec"
                yTicks={["2.50 io/s", "2 io/s", "1.50 io/s", "1 io/s", "0.500 io/s", "0 io/s"]}
                max={2.5}
                series={[
                  { color: C.cyan, points: flat(0) },
                  { color: "#c77c43", points: iops, stroke: 1.3 },
                ]}
              />
              <Legend
                columns={["min", "max", "avg", "current"]}
                widths={[72, 72, 72, 72]}
                rows={[["orange", "vda_写入", "0.00 io/s", "2.00 io/s", "0.20 io/s", "0.47 io/s"]]}
              />
            </Panel>

            <Panel title="每1秒内I/O操作耗时占比" info className="col-span-8">
              <Chart
                left={33}
                right={26}
                yTicks={["4%", "3%", "2%", "1%", "0%"]}
                max={4}
                series={[
                  { color: C.green, points: flat(0) },
                  { color: "#c9a846", points: ioPercent, stroke: 1.3, fill: 0.1 },
                ]}
              />
              <Legend
                sort={false}
                columns={["max", "avg", "current"]}
                widths={[60, 70, 63]}
                rows={[["yellow", "vda_每秒I/O操作%", "3.71%", "0.0901%", "0.187%"]]}
              />
            </Panel>

            <Panel title="每次IO读写的耗时（参考:小于100ms）(beta)" info className="col-span-8 border-r-0">
              <Chart
                left={83}
                yLabel="读取（-）/写入（+）"
                yTicks={["100 ms", "80 ms", "60 ms", "40 ms", "20 ms", "0 s"]}
                max={100}
                series={[
                  { color: C.cyan, points: flat(0) },
                  { color: C.orange, points: ioTime },
                ]}
              />
              <Legend
                columns={["min", "max", "avg", "current"]}
                widths={[60, 75, 67, 71]}
                rows={[["orange", "vda_写入", "0 s", "88.83 ms", "1.70 ms", "2.86 ms"]]}
              />
            </Panel>

            <Panel title="网络Socket连接信息" info className="col-span-16 pb-[5px]">
              <div className="flex min-h-0 flex-1">
                <Chart
                  left={28}
                  right={59}
                  xTicks={TWO_MIN}
                  yTicks={[7, 6, 5, 4, 3, 2, 1, 0]}
                  yTicksRight={[140, 139, 139, 138, 138, 137, 137]}
                  yLabelRight="已使用的所有协议套接字总量"
                  yLabelRightX={8}
                  max={7}
                  series={[
                    { color: "#6e9cf0", points: flat(6), stroke: 1.3 },
                    { color: C.green, points: flat(2), opacity: 0.8 },
                    { color: C.orange, points: flat(1), stroke: 1.3 },
                    { color: "#ad489f", points: outSegs, stroke: 1.3 },
                    { color: "#3f6ca5", points: inSegs, stroke: 1.3 },
                    { color: "#7a60a0", points: flat(0) },
                  ]}
                  dots={[{ color: "#cf4247", points: [[30, 5.84]], lo: 0, hi: 7 }]}
                />
                <div className="w-[321px] shrink-0 pt-[13px]">
                  <Legend
                    wrap="pr-[14px]"
                    columns={["max", "current"]}
                    widths={[60, 72]}
                    rows={[
                      ["crimson", "Sockets_used", "139.00", "139.00"],
                      ["blue", "TCP_alloc", "6.00", "6.00"],
                      ["green", "CurrEstab", "2.00", "2.00"],
                      ["purple", "Tcp_OutSegs", "1.13", "1.07"],
                      ["orange", "UDP_inuse", "1.00", "1.00"],
                      ["navy", "Tcp_InSegs", "0.80", "0.73"],
                    ]}
                  />
                </div>
              </div>
            </Panel>

            <Panel title="打开的文件描述符(左 )/每秒上下文切换次数(右)" className="col-span-8 border-r-0 pb-2">
              <Chart
                left={76}
                right={64}
                yLabel="使用的文件描述符"
                yLabelRight="context_switches"
                yTicks={["1.10 K", "1 K", 900, 800, 700, 600]}
                yTicksRight={[130, 125, 120, 115, 110, 105, 100]}
                min={600}
                max={1100}
                series={[{ color: "#cf4f58", points: flat(832, 56.25), stroke: 3 }]}
                dots={[{ color: "#f7dc4f", points: contextSwitches, lo: 100, hi: 130 }]}
              />
              <ul className="flex h-6 shrink-0 items-center justify-between pl-5 pr-[10px] text-[13px]">
                <li className="flex items-center">
                  <span className="mr-[9px] h-[5px] w-4 rounded-[1px] bg-[#e0545c]" />
                  使用的文件描述符<span className="ml-[7px]">Current: 832</span>
                </li>
                <li className="flex items-center">
                  <span className="mr-[9px] h-[5px] w-4 rounded-[1px] bg-[#f2d648]" />
                  每秒上下文切换次数<span className="ml-[7px]">Current: 126</span>
                </li>
              </ul>
            </Panel>

            <Panel title="【amdeuc-vm2】:各分区可用节点数(EXT.*/XFS)" className="col-span-16 row-span-2">
              <DataTable
                columns={[
                  { label: "设备名", width: "24.400%" },
                  { label: "文件系统", width: "18.100%" },
                  { label: "分区", width: "14.500%" },
                  { label: "节点数", width: "15.200%", sorted: true },
                  { label: "可用数", width: "15.200%" },
                  { label: "使用率" },
                ]}
                row={[
                  { value: "/dev/vda2" },
                  { value: "ext4" },
                  { value: "/" },
                  { value: "3276800" },
                  { value: "3210351", className: "text-[#c8752f]" },
                  { value: "2.0%", className: "bg-[#54a53f] text-white" },
                ]}
              />
            </Panel>

            <Panel title="总文件描述符" className="col-span-8 border-r-0">
              <p className="text-center text-[17px] leading-9 font-medium text-[#54a53f]">9,223,372,036,854,776,000</p>
            </Panel>
          </main>

          <footer className="mr-4 text-right text-[11px] leading-3 text-[#a5a5ad]">CSDN @nvd11</footer>
        </div>
      </div>
    </div>
  );
};

export default App;
